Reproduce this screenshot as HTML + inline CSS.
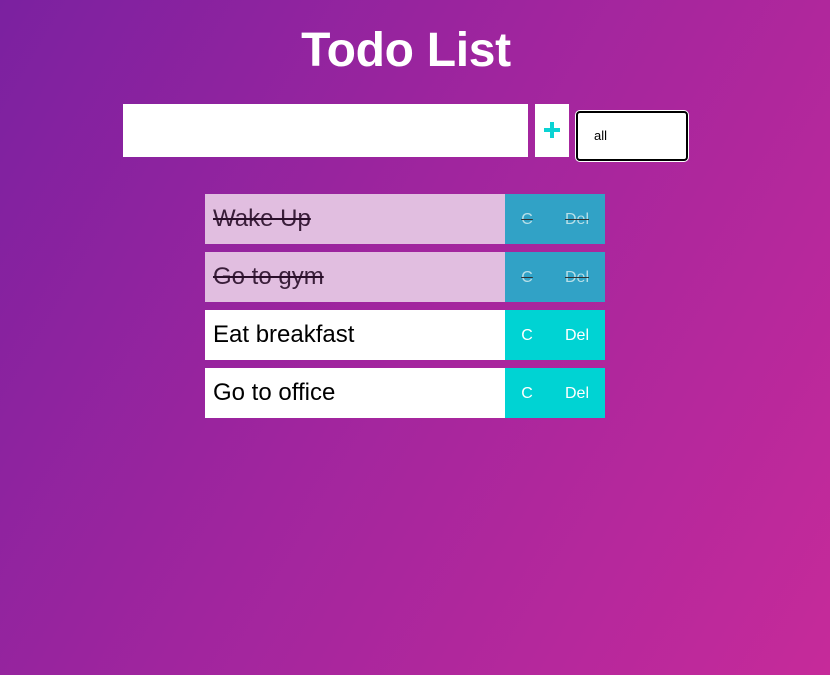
<!DOCTYPE html>
<html><head><style>
*{margin:0;padding:0;box-sizing:border-box}
body{width:830px;height:675px;overflow:hidden;font-family:"Liberation Sans",Arial,sans-serif;background:linear-gradient(120deg,#7b21a0 0%,#a0259e 45%,#c62a9a 100%);position:relative}
h1{position:absolute;top:23px;left:-9px;width:830px;text-align:center;color:#fff;font-size:48px;font-weight:bold;line-height:56px;letter-spacing:-0.3px}
.inp{position:absolute;left:123px;top:104px;width:405px;height:53px;background:#fff}
.plus{position:absolute;left:535px;top:104px;width:34px;height:53px;background:#fff}
.plus:before{content:"";position:absolute;left:9px;top:24px;width:16px;height:4px;background:#0bd3d3}
.plus:after{content:"";position:absolute;left:15px;top:18px;width:4px;height:16px;background:#0bd3d3}
.sel{position:absolute;left:576px;top:111px;width:112px;height:50px;background:#fff;border:2px solid #000;border-radius:4px;box-shadow:0 0 0 1px #fff;font-size:13px;padding-left:16px;line-height:46px;color:#000}
.item{position:absolute;left:205px;width:400px;height:50px;display:flex}
.t{width:300px;background:#fff;font-size:24px;line-height:50px;padding-left:8px;color:#000}
.b{width:50px;background:#00d3d3;color:#fff;font-size:16px;text-align:center;line-height:52px;padding-right:6px}
.done .t{background:#e1bee0;color:#3a1e3a;text-decoration:line-through;text-decoration-color:#2a0f2a}
.done .b{background:#31a2c6;color:#b8dfe8;text-decoration:line-through;text-decoration-color:#333}
</style></head><body>
<h1>Todo List</h1>
<div class="inp"></div>
<div class="plus"></div>
<div class="sel">all</div>
<div class="item done" style="top:194px"><div class="t">Wake Up</div><div class="b">C</div><div class="b">Del</div></div>
<div class="item done" style="top:252px"><div class="t">Go to gym</div><div class="b">C</div><div class="b">Del</div></div>
<div class="item" style="top:310px"><div class="t">Eat breakfast</div><div class="b">C</div><div class="b">Del</div></div>
<div class="item" style="top:368px"><div class="t">Go to office</div><div class="b">C</div><div class="b">Del</div></div>
</body></html>
